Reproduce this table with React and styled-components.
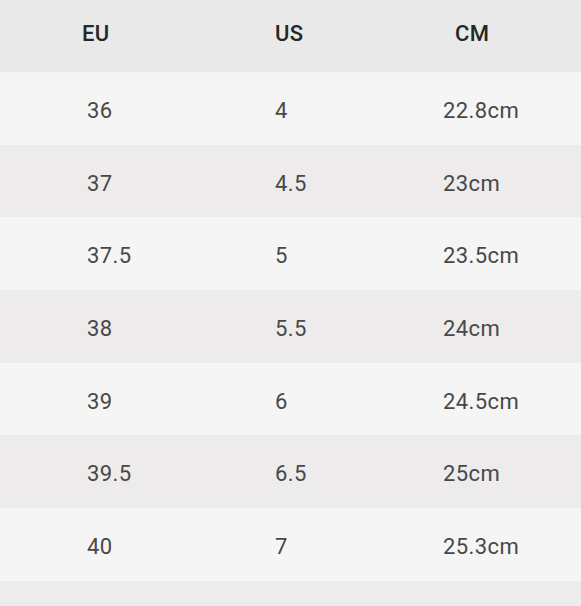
import React from 'react';
import styled, { createGlobalStyle } from 'styled-components';

const GlobalStyle = createGlobalStyle`
  body {
    margin: 0;
    background: #ffffff;
    font-family: Roboto, "Liberation Sans", sans-serif;
  }
`;

const Table = styled.div`
  width: 581px;
  display: flex;
  flex-direction: column;
`;

const Row = styled.div`
  display: grid;
  grid-template-columns: 275px 168px 1fr;
  align-items: center;
  height: ${(p) => (p.$head ? '72px' : '72.7px')};
  background: ${(p) => (p.$head ? '#e9e9e9' : p.$alt ? '#edebeb' : '#f5f5f5')};
`;

const Cell = styled.div`
  font-size: 22px;
  letter-spacing: 0.4px;
  color: #484848;
  padding-left: ${(p) => p.$indent}px;
  margin-top: 4px;
`;

const HeadCell = styled(Cell)`
  font-weight: 500;
  color: #262626;
  margin-top: -6px;
`;

const headers = [
  { label: 'EU', indent: 82 },
  { label: 'US', indent: 0 },
  { label: 'CM', indent: 12 },
];

const sizes = [
  ['36', '4', '22.8cm'],
  ['37', '4.5', '23cm'],
  ['37.5', '5', '23.5cm'],
  ['38', '5.5', '24cm'],
  ['39', '6', '24.5cm'],
  ['39.5', '6.5', '25cm'],
  ['40', '7', '25.3cm'],
  ['40.5', '7.5', '25.5cm'],
];

export default function App() {
  return (
    <>
      <GlobalStyle />
      <Table>
        <Row $head>
          {headers.map((h) => (
            <HeadCell key={h.label} $indent={h.indent}>
              {h.label}
            </HeadCell>
          ))}
        </Row>
        {sizes.map((row, i) => (
          <Row key={row[0]} $alt={i % 2 === 1}>
            {row.map((v, j) => (
              <Cell key={j} $indent={j === 0 ? 87 : 0}>
                {v}
              </Cell>
            ))}
          </Row>
        ))}
      </Table>
    </>
  );
}
